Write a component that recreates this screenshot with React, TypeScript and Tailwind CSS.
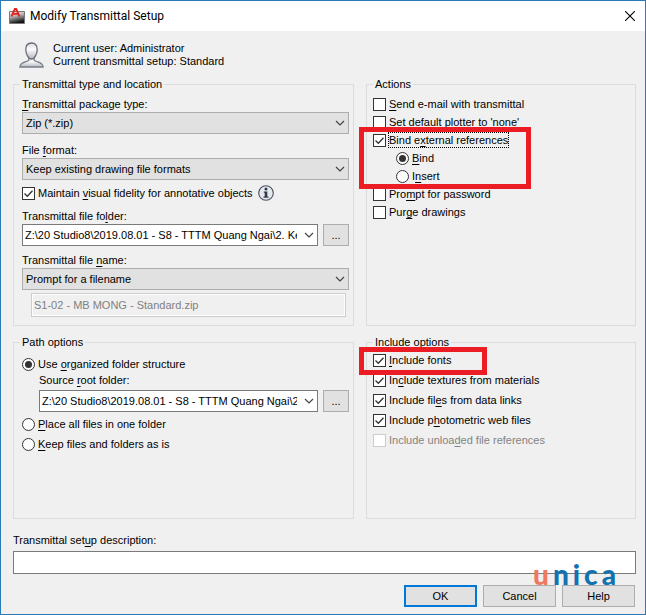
import { useState, type ReactNode } from "react";
import clsx from "clsx";

/** Label text in which the letter after "&" is the underlined access key. */
function Mnemonic({ text }: { text: string }) {
  const at = text.indexOf("&");
  if (at < 0) return <>{text}</>;
  return (
    <>
      {text.slice(0, at)}
      <u className="underline-offset-2">{text[at + 1]}</u>
      {text.slice(at + 2)}
    </>
  );
}

function Group({ title, className, children }: { title: string; className?: string; children: ReactNode }) {
  return (
    <fieldset className={clsx("min-w-0 border border-[#dcdcdc]", className)}>
      <legend className="-ml-0.5 px-0.5 leading-4">{title}</legend>
      {children}
    </fieldset>
  );
}

function Chevron() {
  return (
    <svg className="pointer-events-none absolute top-[7px] right-1 h-2 w-2.5" viewBox="0 0 10 8" fill="none" stroke="#444" strokeWidth="1.2">
      <path d="M1 2l4 4 4-4" />
    </svg>
  );
}

function Dropdown({ id, value, editable }: { id: string; value: string; editable?: boolean }) {
  return (
    <div className="relative min-w-0 flex-1">
      <select
        id={id}
        className={clsx(
          "block h-[22px] w-full appearance-none overflow-hidden border pr-5 leading-5 outline-none",
          editable ? "border-[#7a7a7a] bg-white pl-0.5" : "border-[#adadad] bg-[#e1e1e1] pl-[3px]",
        )}
      >
        <option>{value}</option>
      </select>
      <Chevron />
    </div>
  );
}

function BrowseButton() {
  return (
    <button type="button" className="h-[22px] w-[26px] border border-[#adadad] bg-[#e1e1e1] leading-5">
      ...
    </button>
  );
}

function Check({ text, checked, disabled, focused, className }: { text: string; checked?: boolean; disabled?: boolean; focused?: boolean; className?: string }) {
  return (
    <label className={clsx("flex items-center gap-0.5", className, disabled && "text-[#838383]")}>
      <span className="relative size-[13px] shrink-0">
        <input
          type="checkbox"
          defaultChecked={checked}
          disabled={disabled}
          className="peer block size-[13px] appearance-none border border-[#333] bg-white disabled:border-[#ccc]"
        />
        <svg className="pointer-events-none absolute inset-0 hidden size-[13px] peer-checked:block" viewBox="0 0 13 13" fill="none" stroke="#333" strokeWidth="1.3">
          <path d="M2.5 6.500l2.800 2.800 5.200-5.600" />
        </svg>
      </span>
      <span className={clsx("border border-dotted leading-[14px]", focused ? "border-black" : "border-transparent")}>
        <Mnemonic text={text} />
      </span>
    </label>
  );
}

function Radio({ name, text, checked, onSelect, className }: { name: string; text: string; checked: boolean; onSelect: () => void; className?: string }) {
  return (
    <label className={clsx("flex items-center gap-[3px]", className)}>
      <span className="relative size-[13px] shrink-0">
        <input
          type="radio"
          name={name}
          checked={checked}
          onChange={onSelect}
          className="peer block size-[13px] appearance-none rounded-full border border-[#333] bg-white"
        />
        <span className="pointer-events-none absolute inset-[3px] hidden rounded-full bg-[#333] peer-checked:block" />
      </span>
      <span>
        <Mnemonic text={text} />
      </span>
    </label>
  );
}

function AppIcon() {
  return (
    <svg className="size-4" viewBox="0 0 16 16">
      <defs>
        <linearGradient id="plate" x1="0" y1="0" x2="0.3" y2="1">
          <stop offset="0" stopColor="#f8f8f8" />
          <stop offset="0.450" stopColor="#b4b4b4" />
          <stop offset="1" stopColor="#141414" />
        </linearGradient>
      </defs>
      <path d="M0.500 3.500h15v12h-15z" fill="url(#plate)" stroke="#777" />
      <path d="M2.500 8.500L5.900 0.800h1.200L10.500 8.500M3.800 5.900h5.500" fill="none" stroke="#e2231f" strokeWidth="1.900" />
    </svg>
  );
}

function UserIcon() {
  return (
    <svg className="h-[26px] w-[25px]" viewBox="0 0 25 26">
      <defs>
        <linearGradient id="skin" x1="0" y1="0" x2="0" y2="1">
          <stop offset="0" stopColor="#d4d9e2" />
          <stop offset="0.400" stopColor="#fbfbfc" />
          <stop offset="1" stopColor="#b4b8c0" />
        </linearGradient>
      </defs>
      <path
        d="M9.800 15.500v2.800C8.500 20 0.900 19.600 0.900 25h23.200c0-5.400-7.600-5-8.900-6.700v-2.800z"
        fill="url(#skin)"
        stroke="#7b7e86"
        strokeWidth="1.300"
      />
      <path
        d="M12.500 1C8.700 1 6.800 3.600 6.800 7.400c0 4.400 2.600 9.600 5.700 9.600s5.700-5.200 5.700-9.600C18.200 3.600 16.300 1 12.500 1z"
        fill="url(#skin)"
        stroke="#6b6e77"
        strokeWidth="1.300"
      />
    </svg>
  );
}

function InfoIcon() {
  return (
    <svg className="size-4" viewBox="0 0 16 16">
      <circle cx="8" cy="8" r="7.300" fill="#e4e8f0" stroke="#4a4f5c" strokeWidth="1.100" />
      <circle cx="8" cy="4" r="1.500" fill="#333842" />
      <path d="M5.800 6.500h3.500v5h1.200v1.300h-5v-1.300h1.200V7.800h-.9z" fill="#333842" />
    </svg>
  );
}

const highlight = "pointer-events-none absolute -left-3.5 z-10 border-[5px] border-[#ec1c24]";

export default function App() {
  const [bindMode, setBindMode] = useState("bind");
  const [pathMode, setPathMode] = useState("organized");

  return (
    <div className="flex min-h-screen flex-col border border-[#2b7ab8] bg-[#f0f0f0] font-['Liberation_Sans',Arial,sans-serif] text-[11px] leading-4 text-black">
      <header className="flex h-[30px] items-center bg-white pr-2 pl-2">
        <AppIcon />
        <h1 className="ml-[5px] flex-1 font-['Roboto',sans-serif] text-[12px]">Modify Transmittal Setup</h1>
        <button type="button" aria-label="Close" className="p-0.5">
          <svg className="size-2.5" viewBox="0 0 10 10" stroke="#000" strokeWidth="1.100">
            <path d="M0 0l10 10M10 0L0 10" />
          </svg>
        </button>
      </header>

      <main className="flex flex-1 flex-col pt-[11px] pr-[9px] pb-[7px] pl-3">
        <div className="mb-2 flex items-center gap-[9px] pl-1.5">
          <UserIcon />
          <div className="leading-[13px]">
            <p>Current user: Administrator</p>
            <p>Current transmittal setup: Standard</p>
          </div>
        </div>

        <div className="grid grid-cols-[341fr_270fr] gap-x-3 gap-y-2">
          <Group title="Transmittal type and location" className="pr-1 pb-2 pl-2">
            <label htmlFor="package" className="mt-1 block">
              <Mnemonic text="&Transmittal package type:" />
            </label>
            <Dropdown id="package" value="Zip (*.zip)" />
            <label htmlFor="format" className="mt-2 block">
              <Mnemonic text="File &format:" />
            </label>
            <Dropdown id="format" value="Keep existing drawing file formats" />
            <div className="mt-[5px] flex h-4 items-center gap-1">
              <Check text="Maintain &visual fidelity for annotative objects" checked />
              <InfoIcon />
            </div>
            <label htmlFor="folder" className="mt-[7px] block">
              <Mnemonic text="Transmittal file fo&lder:" />
            </label>
            <div className="flex gap-[5px]">
              <Dropdown id="folder" editable value="Z:\20 Studio8\2019.08.01 - S8 - TTTM Quang Ngai\2. Ke" />
              <BrowseButton />
            </div>
            <label htmlFor="filename" className="mt-1.5 block">
              <Mnemonic text="Transmittal file &name:" />
            </label>
            <Dropdown id="filename" value="Prompt for a filename" />
            <div className="mt-[3px] mr-[3px] ml-[9px] border border-[#ccc] bg-white p-px">
              <input aria-label="File name" disabled defaultValue="S1-02 - MB MONG - Standard.zip" className="block h-5 w-full bg-[#f0f0f0] px-px text-[#808080]" />
            </div>
          </Group>

          <Group title="Actions" className="pt-[3px] pl-1.5 [&>legend]:ml-0">
            <Check className="h-[18px]" text="&Send e-mail with transmittal" />
            <Check className="h-[18px]" text="Set default plotter to 'none'" />
            <div className="relative">
              <Check className="h-[18px]" text="Bind e&xternal references" checked focused />
              <Radio className="ml-[23px] h-[18px]" name="bind" text="&Bind" checked={bindMode === "bind"} onSelect={() => setBindMode("bind")} />
              <Radio className="ml-[23px] h-[18px]" name="bind" text="I&nsert" checked={bindMode === "insert"} onSelect={() => setBindMode("insert")} />
              <div className={clsx(highlight, "-top-1 -bottom-1 w-[172px]")} />
            </div>
            <Check className="h-[18px]" text="Pro&mpt for password" />
            <Check className="h-[18px]" text="Pur&ge drawings" />
          </Group>

          <Group title="Path options" className="min-h-[185px] pr-1 pl-2">
            <Radio className="mt-1.5 h-4" name="path" text="Use &organized folder structure" checked={pathMode === "organized"} onSelect={() => setPathMode("organized")} />
            <label htmlFor="root" className="ml-[17px] block">
              <Mnemonic text="Source &root folder:" />
            </label>
            <div className="mt-0.5 ml-[17px] flex gap-[5px]">
              <Dropdown id="root" editable value="Z:\20 Studio8\2019.08.01 - S8 - TTTM Quang Ngai\2" />
              <BrowseButton />
            </div>
            <Radio className="mt-0.5 h-5" name="path" text="&Place all files in one folder" checked={pathMode === "one"} onSelect={() => setPathMode("one")} />
            <Radio className="h-5" name="path" text="&Keep files and folders as is" checked={pathMode === "keep"} onSelect={() => setPathMode("keep")} />
          </Group>

          <Group title="Include options" className="pl-1.5 [&>legend]:ml-0">
            <div className="relative">
              <Check className="h-5" text="&Include fonts" checked />
              <div className={clsx(highlight, "-top-[3px] -bottom-[5px] w-32")} />
            </div>
            <Check className="h-5" text="In&clude textures from materials" checked />
            <Check className="h-5" text="Include fil&es from data links" checked />
            <Check className="h-5" text="Include p&hotometric web files" checked />
            <Check className="h-5" text="Include unloa&ded file references" disabled />
          </Group>
        </div>

        <label htmlFor="description" className="mt-[13px] mb-[3px] block">
          <Mnemonic text="Transmittal set&up description:" />
        </label>
        <input id="description" type="text" className="block h-[23px] w-full border border-[#7a7a7a] bg-white px-1 outline-none" />

        <div className="relative mt-auto flex justify-end gap-1.5 pt-[11px] pr-px">
          <div className="pointer-events-none absolute -top-3.5 right-5 flex gap-1 font-['Lato',sans-serif] text-[28px] leading-7 font-black text-[#1272b0]">
            <span className="text-[#f07860]">u</span>
            <span>n</span>
            <span>i</span>
            <span>c</span>
            <span>a</span>
          </div>
          <button type="submit" className="h-[22px] w-[73px] border-2 border-[#0078d7] bg-[#e1e1e1]">
            OK
          </button>
          <button type="button" className="h-[22px] w-[73px] border border-[#adadad] bg-[#e1e1e1]">
            Cancel
          </button>
          <button type="button" className="h-[22px] w-[73px] border border-[#adadad] bg-[#e1e1e1]">
            Help
          </button>
        </div>
      </main>
    </div>
  );
}
